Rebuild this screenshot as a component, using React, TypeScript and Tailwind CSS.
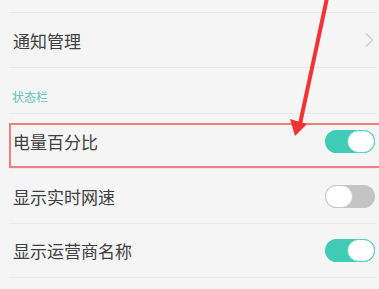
import React from 'react';

const font = { fontFamily: '"Noto Sans CJK SC", "Noto Sans", sans-serif' };

function Toggle({ on }: { on: boolean }) {
  return (
    <div
      className={
        on
          ? 'flex h-[23px] w-[50px] items-center justify-end rounded-full bg-[#3fcbb6]'
          : 'flex h-[23px] w-[50px] items-center justify-start rounded-full bg-[#c4c4c4]'
      }
    >
      <div
        className={
          on
            ? 'h-[23px] w-[28px] rounded-full border border-[#4fd1bd] bg-white'
            : 'h-[23px] w-[28px] rounded-full border border-[#c8c8c8] bg-white'
        }
      />
    </div>
  );
}

function Row({ label, children, last }: { label: string; children?: React.ReactNode; last?: boolean }) {
  return (
    <div
      className={
        last
          ? 'ml-[9px] mr-[3px] flex h-[55px] items-center justify-between border-t border-b border-[#e9e9e9] pl-[4px] pr-[1px]'
          : 'ml-[9px] mr-[3px] flex h-[55px] items-center justify-between border-t border-[#e9e9e9] pl-[4px] pr-[1px]'
      }
    >
      <span className="text-[17px] leading-none text-[#404040]">{label}</span>
      {children}
    </div>
  );
}

export default function App() {
  return (
    <div className="relative h-[289px] w-[379px] overflow-hidden bg-[#f5f5f5]" style={font}>
      <div className="h-[12px]" />
      <Row label="通知管理">
        <svg width="10" height="16" viewBox="0 0 10 16" className="mr-[1px]">
          <path d="M2 1.5 L8.5 8 L2 14.5" fill="none" stroke="#cccccc" strokeWidth="1.2" />
        </svg>
      </Row>
      <div className="ml-[9px] mr-[3px] flex h-[46px] items-end border-t border-[#e9e9e9] pb-[10px] pl-[3px]">
        <span className="text-[12px] leading-none text-[#5ec8b2]">状态栏</span>
      </div>
      <div className="relative">
        <Row label="电量百分比">
          <Toggle on />
        </Row>
        <div className="absolute left-[9px] top-[10px] h-[45px] w-[380px] border-2 border-[#f27f7f]" />
      </div>
      <Row label="显示实时网速">
        <Toggle on={false} />
      </Row>
      <Row label="显示运营商名称" last>
        <Toggle on />
      </Row>

      <svg className="absolute left-0 top-0" width="379" height="289" viewBox="0 0 379 289">
        <line x1="327" y1="-2" x2="300" y2="124" stroke="#f33232" strokeWidth="4" />
        <polygon points="290,119 307,124 295,136" fill="#f33232" />
      </svg>
    </div>
  );
}
